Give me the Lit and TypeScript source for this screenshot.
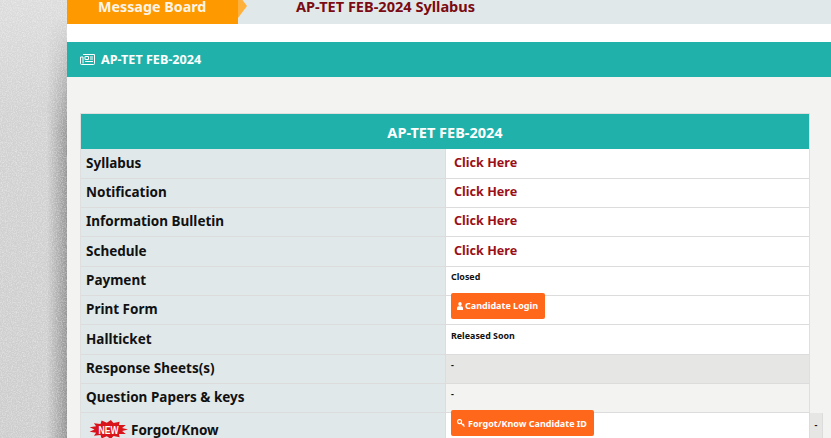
import { LitElement, html, css, svg } from "lit";
import { customElement } from "lit/decorators.js";

const starPoints = () => {
  const pts: string[] = [];
  const n = 13;
  for (let i = 0; i < n * 2; i++) {
    const a = (Math.PI * i) / n;
    const rx = i % 2 ? 14 : 19.5;
    const ry = i % 2 ? 6.8 : 9.5;
    pts.push(`${(19.5 + rx * Math.cos(a)).toFixed(1)},${(9.5 + ry * Math.sin(a)).toFixed(1)}`);
  }
  return pts.join(" ");
};

@customElement("app-root")
export class AppRoot extends LitElement {
  static styles = css`
    :host {
      display: block;
      width: 831px;
      height: 438px;
      overflow: hidden;
      font-family: "Noto Sans", "Open Sans", sans-serif;
      position: relative;
    }
    .page {
      display: flex;
      height: 438px;
      background: #cfcfcf;
    }
    .side {
      width: 67px;
      flex: none;
      position: relative;
      overflow: hidden;
    }
    .side svg {
      display: block;
    }
    .main {
      flex: 1;
      min-width: 0;
      background: #fff;
      display: flex;
      flex-direction: column;
    }
    .topbar {
      height: 24px;
      flex: none;
      background: #e0e8e9;
      display: flex;
      align-items: center;
    }
    .tag {
      width: 171px;
      height: 24px;
      background: #ff9900;
      color: #fdf5e6;
      font-size: 14.3px;
      font-weight: 700;
      line-height: 13px;
      padding-left: 31px;
      box-sizing: border-box;
      flex: none;
    }
    .arrow {
      width: 0;
      height: 0;
      border-left: 9px solid #ffb13c;
      border-top: 12px solid transparent;
      border-bottom: 12px solid transparent;
      margin-top: -12px;
      flex: none;
    }
    .marquee {
      margin-left: 49px;
      color: #7b0a12;
      font-size: 14.55px;
      font-weight: 700;
      line-height: 12px;
      align-self: flex-start;
    }
    .gap {
      height: 18px;
      flex: none;
    }
    .heading {
      height: 35px;
      flex: none;
      background: #20b2aa;
      color: #fff;
      display: flex;
      align-items: center;
      gap: 6px;
      padding-left: 13px;
      font-size: 12.6px;
      font-weight: 700;
    }
    .panel {
      flex: 1;
      background: #f3f3f2;
      padding: 36px 0 0 13px;
    }
    .table {
      width: 730px;
      border: 1px solid #dfdfdf;
      border-bottom: 0;
      box-sizing: border-box;
      font-size: 13.5px;
      color: #111;
    }
    .thead {
      height: 35.27px;
      background: #20b2aa;
      color: #fff;
      font-size: 14.5px;
      font-weight: 700;
      display: flex;
      align-items: center;
      justify-content: center;
      box-sizing: border-box;
    }
    .row {
      display: flex;
      height: 29.333px;
      box-sizing: border-box;
      border-bottom: 1px solid #dcdcdc;
    }
    .l {
      width: 365px;
      flex: none;
      background: #e0e8e9;
      border-right: 1px solid #dcdcdc;
      box-sizing: border-box;
      padding: 0.35px 0 0 5px;
      font-weight: 700;
      line-height: 27px;
      white-space: nowrap;
    }
    .l.tall { line-height: 35px; padding-top: 0; }
    .r {
      width: 363px;
      flex: none;
      background: #fff;
      box-sizing: border-box;
      padding-left: 5px;
      font-size: 8.9px;
      font-weight: 700;
      line-height: 12px;
      padding-top: 4.3px;
      color: #111;
    }
    .r.grey { background: #e6e6e4; }
    .r.soft { background: #f3f3f2; }
    .r.link {
      padding: 0.35px 0 0 8px;
      font-size: 12.6px;
      line-height: 26px;
      color: #9b1016;
    }
    .r.btn-cell { padding-top: 0; padding-left: 5px; }
    .extra {
      width: 14px;
      flex: none;
      background: #e6e6e4;
      border-left: 1px solid #dcdcdc;
      border-right: 1px solid #dcdcdc;
      box-sizing: border-box;
      font-size: 9px;
      font-weight: 700;
      text-align: center;
      line-height: 24px;
      height: 30px;
    }
    .btn {
      display: inline-flex;
      align-items: center;
      gap: 2px;
      height: 26px;
      padding: 0 6.8px 0 6px;
      margin-top: -3px;
      border-radius: 2px;
      background: #ff671b;
      color: #fff;
      font-size: 9px;
      font-weight: 700;
      line-height: 1;
      white-space: nowrap;
    }
    .btn .key { margin-right: 1px; }
    .new {
      display: inline-flex;
      vertical-align: top;
      margin: 7px 3px 0 3px;
    }
  `;

  private link(label: string) {
    return html`<div class="row"><div class="l">${label}</div><div class="r link">Click Here</div></div>`;
  }

  render() {
    return html`
      <div class="page">
        <div class="side">
          <svg width="67" height="438">
            <defs>
              <filter id="n" x="0" y="0" width="100%" height="100%">
                <feTurbulence type="fractalNoise" baseFrequency="0.8" numOctaves="2" seed="4" />
                <feColorMatrix values="0 0 0 0 1  0 0 0 0 1  0 0 0 0 1  1.6 0 0 0 -0.62" />
              </filter>
              <linearGradient id="g" x1="0" y1="0" x2="0" y2="1">
                <stop offset="0" stop-color="#dcdcdc" />
                <stop offset="0.25" stop-color="#d2d2d2" />
                <stop offset="1" stop-color="#cdcdcd" />
              </linearGradient>
              <linearGradient id="s" x1="0" y1="0" x2="1" y2="0">
                <stop offset="0.7" stop-color="#000" stop-opacity="0" />
                <stop offset="1" stop-color="#000" stop-opacity="0.28" />
              </linearGradient>
              <linearGradient id="m" x1="0" y1="0" x2="0" y2="1">
                <stop offset="0.04" stop-color="#fff" stop-opacity="0" />
                <stop offset="0.3" stop-color="#fff" stop-opacity="1" />
              </linearGradient>
              <mask id="mk"><rect width="67" height="438" fill="url(#m)" /></mask>
            </defs>
            <rect width="67" height="438" fill="url(#g)" />
            <rect width="67" height="438" fill="url(#s)" mask="url(#mk)" />
            <rect width="67" height="438" filter="url(#n)" opacity="0.55" />
          </svg>
        </div>
        <div class="main">
          <div class="topbar">
            <div class="tag">Message Board</div>
            <div class="arrow"></div>
            <div class="marquee">AP-TET FEB-2024 Syllabus</div>
          </div>
          <div class="gap"></div>
          <div class="heading">
            <svg width="15" height="11" viewBox="0 0 15 11" fill="none" stroke="#fff" stroke-width="1">
              <path d="M3 .5h11.5v9a1 1 0 0 1-1 1H1.5a1 1 0 0 1-1-1V3H3v6.5" />
              <path d="M5 2.5h3.5v3H5zM10 3h3M10 5h3M5 7.5h8" />
            </svg>
            <span>AP-TET FEB-2024</span>
          </div>
          <div class="panel">
            <div class="table">
              <div class="thead">AP-TET FEB-2024</div>
              ${this.link("Syllabus")}
              ${this.link("Notification")}
              ${this.link("Information Bulletin")}
              ${this.link("Schedule")}
              <div class="row"><div class="l">Payment</div><div class="r">Closed</div></div>
              <div class="row"><div class="l">Print Form</div><div class="r btn-cell">
                <span class="btn">
                  <svg width="6" height="8" viewBox="0 0 7 8" fill="#fff" preserveAspectRatio="none"><circle cx="3.5" cy="2" r="2" /><path d="M0 8V6.2C0 5 1 4.2 2 4.2h3c1 0 2 .8 2 2V8z" /></svg>
                  Candidate Login
                </span></div></div>
              <div class="row"><div class="l">Hallticket</div><div class="r">Released Soon</div></div>
              <div class="row"><div class="l">Response Sheets(s)</div><div class="r grey">-</div></div>
              <div class="row"><div class="l">Question Papers &amp; keys</div><div class="r soft">-</div></div>
              <div class="row">
                <div class="l tall">
                  <span class="new">
                    <svg width="39" height="19" viewBox="0 0 39 19">
                      ${svg`<polygon points="${starPoints()}" fill="#d8141a" />`}
                      <text x="19.5" y="13.5" text-anchor="middle" font-family="Liberation Sans, sans-serif" font-size="10" font-weight="700" fill="#fff" textLength="20" lengthAdjust="spacingAndGlyphs">NEW</text>
                    </svg>
                  </span>Forgot/Know
                </div>
                <div class="r btn-cell">
                  <span class="btn">
                    <svg class="key" width="8" height="8" viewBox="0 0 8 8" fill="none" stroke="#fff" stroke-width="1.1"><circle cx="2.6" cy="2.6" r="2" /><path d="M4 4 7.5 7.5M6 6l1-1" /></svg>
                    Forgot/Know Candidate ID
                  </span>
                </div>
                <div class="extra">-</div>
              </div>
            </div>
          </div>
        </div>
      </div>
    `;
  }
}
